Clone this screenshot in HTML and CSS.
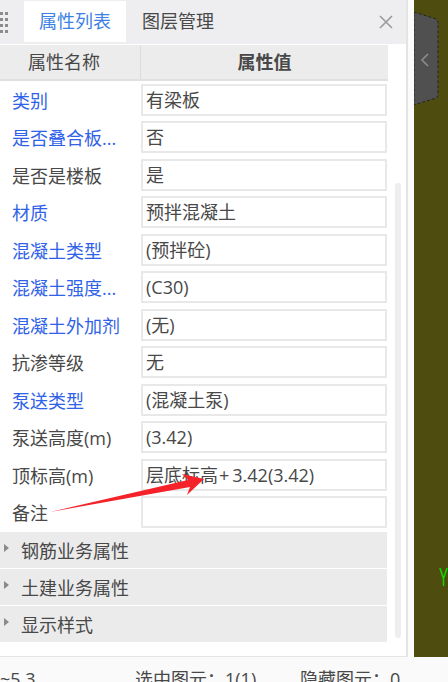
FILE: index.html
```html
<!DOCTYPE html>
<html lang="zh-CN">
<head>
  <meta charset="UTF-8">
  <title>属性列表</title>
  <link rel="stylesheet" href="styles.css">
</head>
<body>
  <div class="main">
    <div class="panel">
      <div class="tabs">
        <svg class="grip" width="8" height="24" viewBox="0 0 8 24">
          <path d="M0 0h3v3H0zM5 0h3v3H5zM0 6h3v3H0zM5 6h3v3H5zM0 12h3v3H0zM5 12h3v3H5zM0 18h3v3H0zM5 18h3v3H5z" fill="#8c8c8c"/>
        </svg>
        <div class="tab active">属性列表</div>
        <div class="tab">图层管理</div>
        <svg class="close" width="14" height="14" viewBox="0 0 14 14">
          <path d="M1 1l12 12M13 1L1 13" stroke="#9a9a9a" stroke-width="1.6" fill="none"/>
        </svg>
      </div>

      <div class="panel-body">
        <div class="grid">
          <div class="head">
            <div class="head-name">属性名称</div>
            <div class="head-value">属性值</div>
          </div>

          <div class="rows">
            <div class="row"><div class="name link">类别</div><div class="value">有梁板</div></div>
            <div class="row"><div class="name link">是否叠合板...</div><div class="value">否</div></div>
            <div class="row"><div class="name">是否是楼板</div><div class="value">是</div></div>
            <div class="row"><div class="name link">材质</div><div class="value">预拌混凝土</div></div>
            <div class="row"><div class="name link">混凝土类型</div><div class="value">(预拌砼)</div></div>
            <div class="row"><div class="name link">混凝土强度...</div><div class="value">(C30)</div></div>
            <div class="row"><div class="name link">混凝土外加剂</div><div class="value">(无)</div></div>
            <div class="row"><div class="name">抗渗等级</div><div class="value">无</div></div>
            <div class="row"><div class="name link">泵送类型</div><div class="value">(混凝土泵)</div></div>
            <div class="row"><div class="name">泵送高度(m)</div><div class="value">(3.42)</div></div>
            <div class="row"><div class="name">顶标高(m)</div><div class="value">层底标高<span class="plus">+</span>3.42(3.42)</div></div>
            <div class="row"><div class="name">备注</div><div class="value"></div></div>
          </div>

          <div class="groups">
            <div class="group"><span class="caret"></span>钢筋业务属性</div>
            <div class="group"><span class="caret"></span>土建业务属性</div>
            <div class="group"><span class="caret"></span>显示样式</div>
          </div>
        </div>
        <div class="scrollbar"></div>
      </div>
    </div>

    <div class="view">
      <svg class="handle" width="26" height="95" viewBox="0 0 26 95">
        <path d="M0 0L22 7L24 10V84L22 86L0 93Z" fill="#505050" stroke="#222" stroke-width="1" stroke-dasharray="3 2"/>
        <path d="M14 42L8 48L14 54" stroke="#8c8c8c" stroke-width="1.6" fill="none"/>
      </svg>
      <span class="axis">Y</span>
    </div>
  </div>

  <div class="status">
    <span class="status-ver">~5.3</span>
    <span class="status-sel">选中图元：1(1)</span>
    <span class="status-hide">隐藏图元：0</span>
  </div>

  <svg class="arrow" width="448" height="682" viewBox="0 0 448 682">
    <polygon points="50,512 188,480 182,474 204,479 187,495 190,487" fill="#f5222a"/>
  </svg>
</body>
</html>
```

FILE: styles.css
```css
html, body {
  margin: 0;
  height: 682px;
  overflow: hidden;
}
body {
  display: flex;
  flex-direction: column;
  position: relative;
  background-color: #fbfbfb;
  font-family: "Open Sans", "Noto Sans CJK SC", sans-serif;
  font-size: 18px;
  color: #484848;
}
.main {
  display: flex;
  height: 657px;
  flex: none;
}
.panel {
  width: 406px;
  height: 656px;
  background-color: white;
  border-right: 2px solid #e4e4e4;
  border-bottom: 2px solid #e4e4e4;
}
.tabs {
  display: flex;
  align-items: center;
  height: 43px;
  padding-top: 1px;
  background-color: #eeeef0;
  border-bottom: 1px solid white;
  position: relative;
}
.grip {
  flex: none;
  width: 8px;
  margin-right: 16px;
  margin-top: 2px;
}
.tab {
  height: 41px;
  margin-top: -2px;
  line-height: 41px;
  width: 102px;
  text-align: center;
  flex: none;
}
.tab.active {
  background-color: white;
  color: #3d7fe6;
}
.tab + .tab {
  width: 107px;
  text-align: left;
  padding-left: 16px;
}
.close {
  position: absolute;
  left: 379px;
  top: 15px;
}
.panel-body {
  display: flex;
  height: 612px;
}
.grid {
  width: 388px;
  flex: none;
}
.head {
  display: flex;
  height: 34px;
  line-height: 34px;
  background-color: #ececec;
  border-bottom: 2px solid #e0e0e0;
}
.head-name {
  width: 112px;
  padding-left: 28px;
  border-right: 1px solid #dcdcdc;
  flex: none;
}
.head-value {
  flex: 1;
  text-align: center;
  font-weight: bold;
}
.row {
  display: flex;
  align-items: center;
  height: 37.5px;
}
.name {
  width: 129px;
  padding-left: 12px;
  flex: none;
  white-space: nowrap;
}
.name.link {
  color: #2f62e8;
}
.value {
  box-sizing: border-box;
  width: 246px;
  height: 32px;
  line-height: 28px;
  padding-left: 3px;
  background-color: white;
  border: 2px solid #e8e8e8;
  white-space: nowrap;
}
.plus {
  padding: 0 3px 0 1px;
}
.groups {
  padding-top: 1px;
}
.group {
  display: flex;
  align-items: center;
  width: 387px;
  height: 35.5px;
  margin-bottom: 1.5px;
  padding-left: 4px;
  box-sizing: border-box;
  background-color: #ebebeb;
}
.caret {
  width: 0;
  height: 0;
  margin-right: 12px;
  margin-top: -4px;
  border-left: 5px solid #8a8a8a;
  border-top: 4px solid transparent;
  border-bottom: 4px solid transparent;
}
.scrollbar {
  width: 6px;
  height: 455px;
  margin: 138px 0 0 7px;
  border-radius: 3px;
  background-color: #eeeeee;
}
.view {
  flex: 1;
  margin-left: 6px;
  position: relative;
  background-color: #4f4c10;
}
.handle {
  position: absolute;
  left: 0;
  top: 12px;
}
.axis {
  position: absolute;
  left: 25px;
  top: 564px;
  color: #00e000;
  font-family: "Liberation Sans", sans-serif;
  font-size: 25px;
  line-height: 26px;
  transform: scaleX(0.55);
  transform-origin: left top;
}
.status {
  height: 25px;
  background-color: #fafafa;
  line-height: 26px;
  position: relative;
}
.status span {
  position: absolute;
  top: 9px;
  white-space: nowrap;
}
.status-ver {
  left: 0;
}
.status-sel {
  left: 135px;
}
.status-hide {
  left: 300px;
}
.arrow {
  position: absolute;
  left: 0;
  top: 0;
  pointer-events: none;
}
```
